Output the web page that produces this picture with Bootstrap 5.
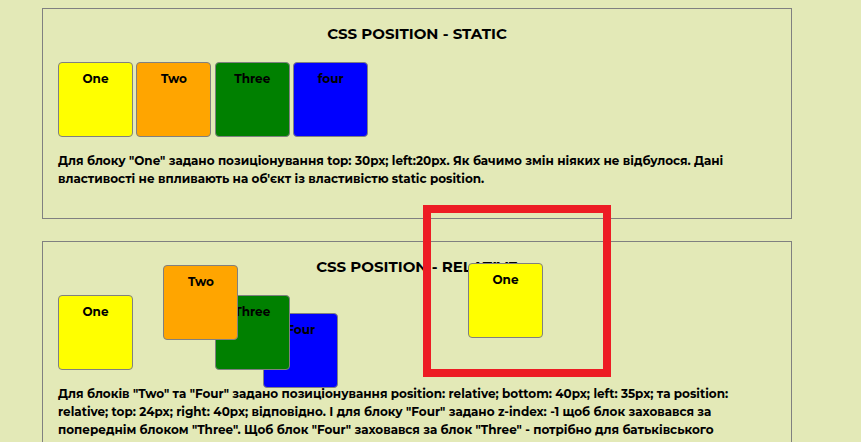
<!DOCTYPE html>
<html lang="uk">
<head>
<meta charset="utf-8">
<meta name="viewport" content="width=device-width, initial-scale=1">
<title>CSS position</title>
<link rel="stylesheet" href="https://cdn.jsdelivr.net/npm/bootstrap@5.3.0/dist/css/bootstrap.min.css">
<style>
  body {
    background: #e3e9b7;
    color: #000;
    font: 700 12px/18px Montserrat, Inter, sans-serif;
  }
  main {
    padding: 8px 69px 0 42px;
    gap: 22px;
  }
  .demo {
    border: 1px solid gray;
    padding: 15px;
    isolation: isolate;
  }
  .demo h2 {
    font-size: 15px;
    font-weight: 700;
    line-height: 20px;
    margin-bottom: 18px;
  }
  .demo p { margin: 15px 0; }
  .tile {
    width: 75px;
    height: 75px;
    padding-top: 7px;
    border: 1px solid gray;
    border-radius: 4px;
  }
  .yellow { background: yellow; }
  .orange { background: orange; }
  .green { background: green; }
  .blue { background: blue; }
  /* tiles moved from their normal place */
  .moved-up { bottom: 30px; left: 27px; }
  .moved-down { top: 18px; right: 30px; z-index: -1; }
  .loose { top: 21px; left: 425px; }
  .frame {
    top: -37px;
    left: 380px;
    width: 188px;
    height: 172px;
    border: 8px solid #ed1c24;
  }
</style>
<script src="https://cdn.jsdelivr.net/npm/bootstrap@5.3.0/dist/js/bootstrap.bundle.min.js"></script>
</head>
<body class="vh-100 overflow-hidden">
<main class="d-flex flex-column">
  <section class="demo">
    <h2 class="text-center">CSS POSITION - STATIC</h2>
    <div>
      <div class="tile yellow text-center d-inline-block align-top">One</div>
      <div class="tile orange text-center d-inline-block align-top">Two</div>
      <div class="tile green text-center d-inline-block align-top">Three</div>
      <div class="tile blue text-center d-inline-block align-top">four</div>
    </div>
    <p>Для блоку "One" задано позиціонування top: 30px; left:20px. Як бачимо змін ніяких не відбулося. Дані<br>
      властивості не впливають на об'єкт із властивістю static position.</p>
  </section>
  <section class="demo position-relative">
    <h2 class="text-center">CSS POSITION - RELATIVE</h2>
    <div>
      <div class="tile yellow text-center d-inline-block align-top">One</div>
      <div class="tile orange text-center d-inline-block align-top position-relative moved-up">Two</div>
      <div class="tile green text-center d-inline-block align-top">Three</div>
      <div class="tile blue text-center d-inline-block align-top position-relative moved-down">Four</div>
    </div>
    <p>Для блоків "Two" та "Four" задано позиціонування position: relative; bottom: 40px; left: 35px; та position:<br>
      relative; top: 24px; right: 40px; відповідно. І для блоку "Four" задано z-index: -1 щоб блок заховався за<br>
      попереднім блоком "Three". Щоб блок "Four" заховався за блок "Three" - потрібно для батьківського</p>
    <div class="tile yellow text-center position-absolute loose">One</div>
    <div class="frame position-absolute"></div>
  </section>
</main>
</body>
</html>
